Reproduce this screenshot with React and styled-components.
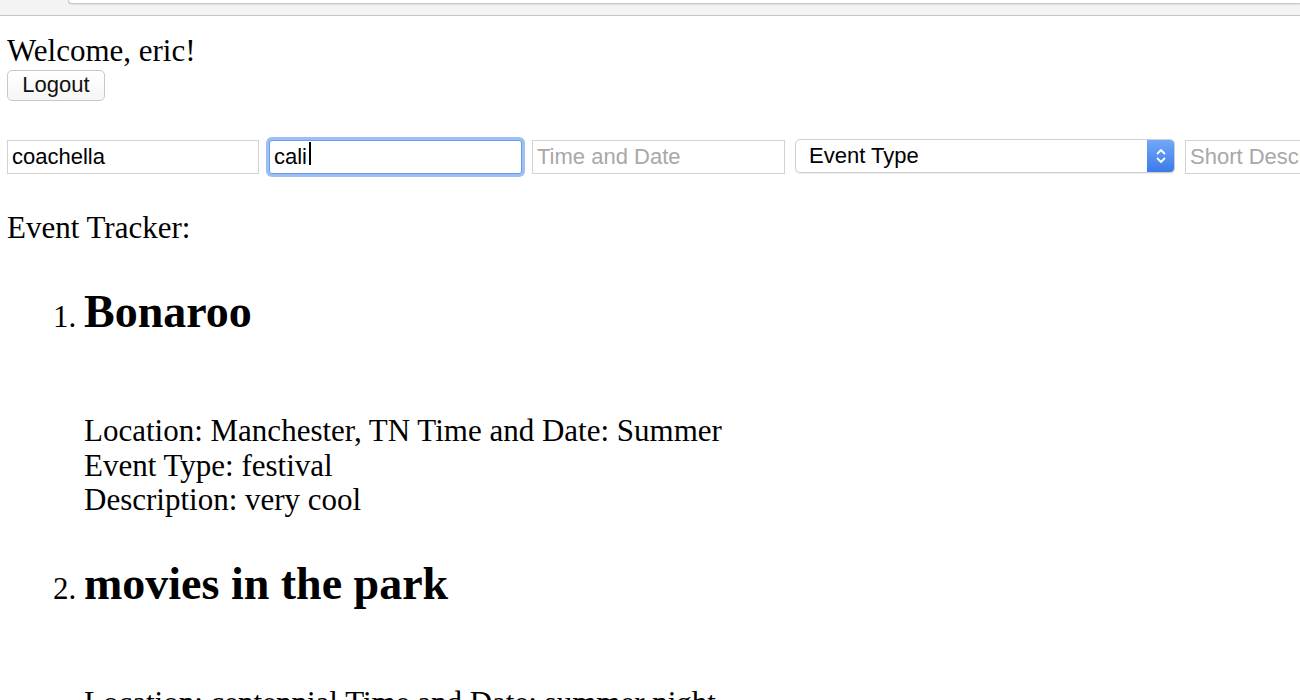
import React from "react";
import styled, { createGlobalStyle } from "styled-components";

const Global = createGlobalStyle`
  html, body { margin: 0; padding: 0; background: #fff; }
  body { font-family: "Liberation Serif", "Times New Roman", serif; font-size: 31px; color: #000; }
`;

const Chrome = styled.div`
  height: 15px;
  background: #f3f3f3;
  border-bottom: 1px solid #c6c6c6;
  display: flex;
  justify-content: flex-end;
  align-items: flex-start;
`;

const AddressBar = styled.div`
  width: 1231px;
  height: 3px;
  background: #fff;
  border: 1px solid #c9c9c9;
  border-top: none;
  border-right: none;
  border-bottom-left-radius: 6px;
  box-shadow: 0 1px 1px rgba(0,0,0,0.08);
`;

const Main = styled.main`
  padding: 18px 7px 0;
`;

const Welcome = styled.div`
  line-height: 34.5px;
`;

const LogoutButton = styled.button`
  margin-top: 1px;
  width: 98px;
  height: 31px;
  background: linear-gradient(#fff, #f6f6f6);
  border: 1px solid #c8c8c8;
  border-radius: 5px;
  font-family: "Liberation Sans", Arial, sans-serif;
  font-size: 22px;
  color: #111;
  padding: 0;
  display: block;
`;

const Form = styled.form`
  margin-top: 35px;
  display: flex;
  gap: 10px;
  align-items: center;
  white-space: nowrap;
`;

const Field = styled.div`
  position: relative;
  flex: none;
`;

const TextInput = styled.input`
  box-sizing: border-box;
  width: ${p => p.$w || 253}px;
  height: 34px;
  padding: 0 4px;
  font-family: "Liberation Sans", Arial, sans-serif;
  font-size: 22px;
  color: #000;
  background: #fff;
  border: 1px solid ${p => (p.$focused ? "#6a9be8" : "#d3d3d3")};
  border-radius: ${p => (p.$focused ? "3px" : "0")};
  box-shadow: ${p => (p.$focused ? "0 0 0 3px #9dc0f4" : "none")};
  outline: none;
  &::placeholder { color: #a8a8a8; }
`;

const Caret = styled.span`
  position: absolute;
  left: 40px;
  top: 6px;
  width: 2px;
  height: 23px;
  background: #000;
`;

const SelectBox = styled.div`
  flex: none;
  box-sizing: border-box;
  width: 380px;
  height: 34px;
  margin-top: 2px;
  display: flex;
  align-items: stretch;
  border: 1px solid #cfcfcf;
  border-radius: 5px;
  background: #fff;
  box-shadow: 0 1px 1px rgba(0,0,0,0.08);
  overflow: hidden;
`;

const SelectLabel = styled.span`
  flex: 1;
  display: flex;
  align-items: center;
  padding-left: 13px;
  font-family: "Liberation Sans", Arial, sans-serif;
  font-size: 22px;
  color: #000;
`;

const SelectArrow = styled.span`
  width: 27px;
  background: linear-gradient(#72a8f7, #3a7be8);
  display: flex;
  align-items: center;
  justify-content: center;
`;

const Title = styled.div`
  margin-top: 37px;
  line-height: 34.5px;
`;

const List = styled.ol`
  margin: 40px 0 0;
  padding-left: 77px;
`;

const Item = styled.li`
  line-height: 34.5px;
  & + & { margin-top: 39px; }
`;

const ItemTitle = styled.h2`
  margin: 0;
  font-size: 46px;
  line-height: 53px;
  font-weight: bold;
`;

const Details = styled.div`
  margin-top: 76px;
`;

const events = [
  { name: "Bonaroo", location: "Manchester, TN", time: "Summer", type: "festival", desc: "very cool" },
  { name: "movies in the park", location: "centennial", time: "summer night", type: "movie", desc: "fun" },
];

export default function App() {
  return (
    <>
      <Global />
      <Chrome><AddressBar /></Chrome>
      <Main>
        <Welcome>Welcome, eric!</Welcome>
        <LogoutButton type="button">Logout</LogoutButton>
        <Form onSubmit={e => e.preventDefault()}>
          <Field><TextInput $w={252} defaultValue="coachella" placeholder="Event Name" /></Field>
          <Field>
            <TextInput $focused defaultValue="cali" placeholder="Location" />
            <Caret />
          </Field>
          <Field><TextInput placeholder="Time and Date" /></Field>
          <SelectBox>
            <SelectLabel>Event Type</SelectLabel>
            <SelectArrow>
              <svg width="12" height="18" viewBox="0 0 12 18" fill="none" stroke="#fff" strokeWidth="1.8" strokeLinecap="round" strokeLinejoin="round">
                <path d="M2.5 6.5 L6 3 L9.5 6.5" />
                <path d="M2.5 11.5 L6 15 L9.5 11.5" />
              </svg>
            </SelectArrow>
          </SelectBox>
          <Field><TextInput placeholder="Short Description" /></Field>
        </Form>
        <Title>Event Tracker:</Title>
        <List>
          {events.map(ev => (
            <Item key={ev.name}>
              <ItemTitle>{ev.name}</ItemTitle>
              <Details>
                Location: {ev.location} Time and Date: {ev.time}
                <br />
                Event Type: {ev.type}
                <br />
                Description: {ev.desc}
              </Details>
            </Item>
          ))}
        </List>
      </Main>
    </>
  );
}
